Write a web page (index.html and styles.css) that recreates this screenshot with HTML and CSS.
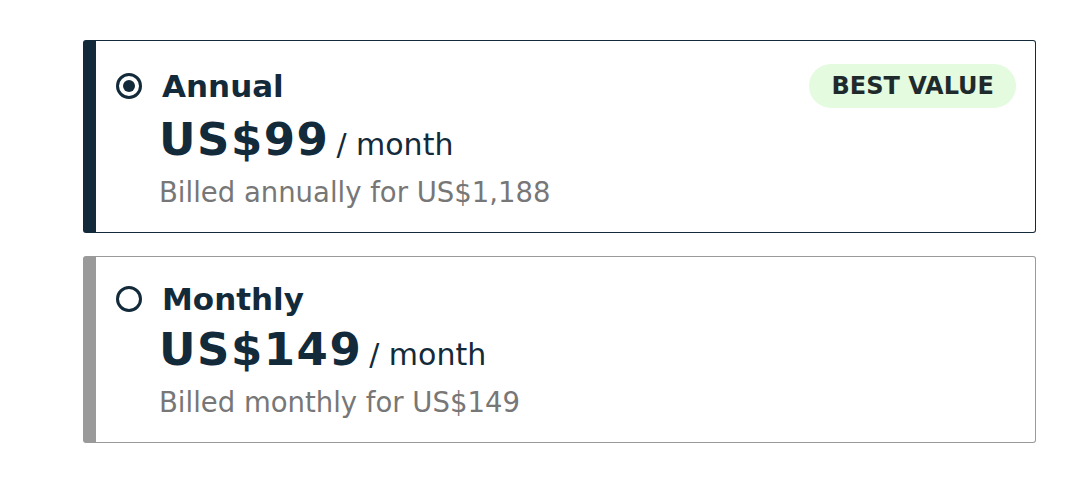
FILE: index.html
```html
<!DOCTYPE html>
<html>
<head lang="en">
<meta charset="UTF-8">
<title>Choose a plan</title>
<link rel="stylesheet" href="styles.css">
</head>
<body>
<div class="plans">
    <div class="plan selected">
        <div class="plan-head">
            <div class="plan-name">
                <span class="radio"></span>
                <span class="title">Annual</span>
            </div>
            <span class="badge">BEST VALUE</span>
        </div>
        <div class="plan-body">
            <div class="price"><span class="amount">US$99</span><span class="per">/ month</span></div>
            <div class="billed">Billed annually for US$1,188</div>
        </div>
    </div>
    <div class="plan">
        <div class="plan-head">
            <div class="plan-name">
                <span class="radio"></span>
                <span class="title">Monthly</span>
            </div>
        </div>
        <div class="plan-body">
            <div class="price"><span class="amount">US$149</span><span class="per">/ month</span></div>
            <div class="billed">Billed monthly for US$149</div>
        </div>
    </div>
</div>
</body>
</html>
```

FILE: styles.css
```css
*{
    margin: 0px;
    padding: 0px;
    box-sizing: border-box;
}
body{
    background: #fff;
    font-family: "DejaVu Sans", Inter, sans-serif;
    color: #132a3a;
}
.plans{
    width: 953px;
    margin: 40px 0 0 83px;
    display: flex;
    flex-direction: column;
    gap: 23px;
}
.plan{
    border: 1px solid #9a9a9a;
    border-left: 13px solid #9a9a9a;
    border-radius: 3px;
    padding: 23px 19px 20px 20px;
}
.plan.selected{
    border-color: #132a3a;
    border-left-color: #132a3a;
}
.plan-head{
    display: flex;
    align-items: center;
    justify-content: space-between;
}
.plan-name{
    display: flex;
    align-items: center;
    gap: 20px;
}
.radio{
    width: 26px;
    height: 26px;
    border: 3px solid #132a3a;
    border-radius: 50%;
    display: flex;
    align-items: center;
    justify-content: center;
}
.selected .radio::after{
    content: "";
    width: 12px;
    height: 12px;
    border-radius: 50%;
    background: #132a3a;
}
.title{
    font-size: 31px;
    font-weight: 600;
    line-height: 38px;
}
.badge{
    background: #e4fbe0;
    color: #1f2a2c;
    font-size: 24px;
    font-weight: 700;
    line-height: 44px;
    padding: 0 22px;
    border-radius: 22px;
}
.plan-body{
    padding-left: 43px;
}
.price{
    margin-top: 6px;
    font-size: 45px;
    line-height: 52px;
}
.amount{
    font-weight: 700;
    letter-spacing: 1.5px;
}
.per{
    margin-left: 7px;
    font-size: 30px;
    font-weight: 400;
    line-height: 1;
}
.billed{
    margin-top: 6px;
    font-size: 27.5px;
    color: #777;
    line-height: 40px;
}
```
